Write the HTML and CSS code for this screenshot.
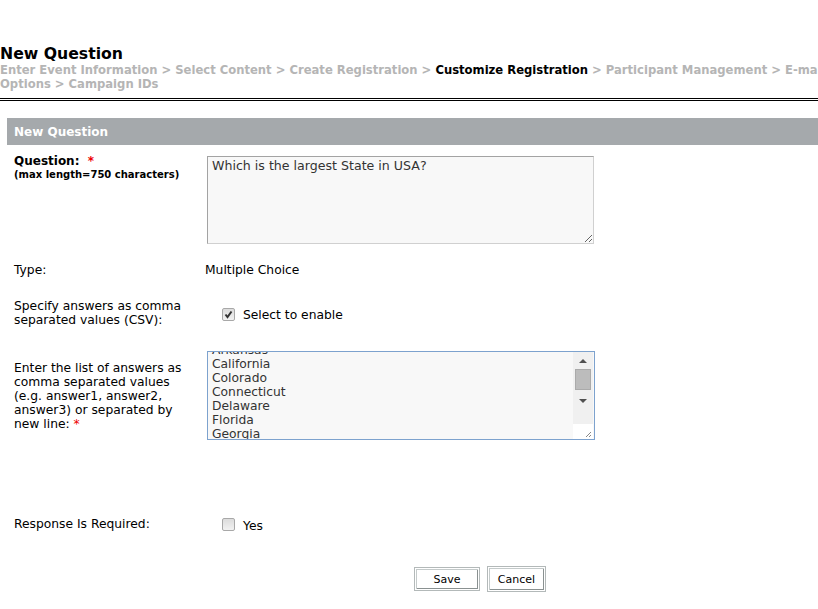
FILE: index.html
```html
<!DOCTYPE html>
<html>
<head>
<meta charset="utf-8">
<title>New Question</title>
<link rel="stylesheet" href="styles.css">
</head>
<body>
<div class="header">
  <h1 class="title">New Question</h1>
  <div class="crumbs">Enter Event Information &gt; Select Content &gt; Create Registration &gt; <span class="current">Customize Registration</span> &gt; Participant Management &gt; E-mail Options &gt; Campaign IDs</div>
  <div class="rule"></div>
</div>
<div class="panel-bar">New Question</div>
<div class="form">
  <div class="row row-question">
    <div class="label">
      <div class="qlabel">Question: <span class="req">*</span></div>
      <div class="hint">(max length=750 characters)</div>
    </div>
    <div class="value">
      <textarea class="qbox" readonly>Which is the largest State in USA?</textarea>
    </div>
  </div>
  <div class="row row-type">
    <div class="label">Type:</div>
    <div class="value">Multiple Choice</div>
  </div>
  <div class="row row-csv">
    <div class="label narrow">Specify answers as comma separated values (CSV):</div>
    <div class="value check-line csv-check">
      <span class="cb"><svg width="11" height="11" viewBox="0 0 11 11"><path d="M2.5 5.5 L4.5 8 L8.5 2.5" fill="none" stroke="#333" stroke-width="2"/></svg></span>
      <span>Select to enable</span>
    </div>
  </div>
  <div class="row row-list">
    <div class="label narrow">Enter the list of answers as comma separated values (e.g. answer1, answer2, answer3) or separated by new line: <span class="req">*</span></div>
    <div class="value">
      <div class="listbox">
        <div class="list-view">
          <div class="list-text">Arkansas<br>California<br>Colorado<br>Connecticut<br>Delaware<br>Florida<br>Georgia<br>Hawaii</div>
        </div>
        <div class="scrollbar">
          <div class="sb-track">
            <span class="arrow up"></span>
            <span class="thumb"></span>
            <span class="arrow down"></span>
          </div>
          <div class="sb-corner"><svg width="8" height="8" viewBox="0 0 8 8"><path d="M7 2 L2 7 M7 5 L5 7" stroke="#888" stroke-width="1"/></svg></div>
        </div>
      </div>
    </div>
  </div>
  <div class="row row-required">
    <div class="label">Response Is Required:</div>
    <div class="value check-line">
      <span class="cb"></span>
      <span class="yes">Yes</span>
    </div>
  </div>
  <div class="buttons">
    <button class="btn save">Save</button>
    <button class="btn cancel">Cancel</button>
  </div>
</div>
</body>
</html>
```
FILE: styles.css
```css
html, body {
  margin: 0;
  padding: 0;
  background: #fff;
}
body {
  font-family: "DejaVu Sans", Verdana, sans-serif;
  font-size: 12.3px;
  color: #000;
  width: 818px;
  overflow: hidden;
}
.header {
  padding-top: 45px;
}
.title {
  margin: 0;
  font-family: "DejaVu Sans", Tahoma, sans-serif;
  font-weight: bold;
  font-size: 15.7px;
  line-height: 18px;
  height: 18px;
  color: #000;
}
.crumbs {
  font-family: "DejaVu Sans", Tahoma, sans-serif;
  font-weight: bold;
  font-size: 11.6px;
  line-height: 14px;
  color: #b5b5b5;
  width: 830px;
  height: 28px;
  overflow: hidden;
}
.crumbs .current {
  color: #000;
}
.rule {
  margin-top: 7px;
  border-top: 3px double #000;
}
.panel-bar {
  margin: 17px 0 0 7px;
  height: 26px;
  padding-top: 1px;
  line-height: 27px;
  background: #a5a9ac;
  color: #fff;
  font-weight: bold;
  font-size: 12px;
  padding-left: 7px;
}
.form {
  padding-left: 14px;
}
.row {
  display: grid;
  grid-template-columns: 191px 1fr;
  line-height: 14px;
}
.row-question {
  margin-top: 9px;
  align-items: start;
}
.qlabel {
  font-weight: bold;
  font-size: 12px;
}
.req {
  color: #e00;
  margin-left: 4px;
}
.row-list .req {
  margin-left: 0;
}
.hint {
  font-weight: bold;
  font-size: 10px;
  line-height: 14px;
}
.qbox {
  display: block;
  margin: 2px 0 0 2px;
  box-sizing: border-box;
  width: 387px;
  height: 88px;
  border: 1px solid #a3a3a3;
  border-right-color: #d0d0d0;
  border-bottom-color: #d0d0d0;
  background: #f8f8f8;
  padding: 2px 4px;
  font-family: "DejaVu Sans", Verdana, sans-serif;
  font-size: 12.6px;
  line-height: 14px;
  color: #333;
  outline: none;
  resize: both;
}
.row-type {
  margin-top: 19px;
}
.row-csv {
  margin-top: 22px;
  align-items: center;
}
.narrow {
  width: 184px;
}
.check-line {
  display: flex;
  align-items: center;
  padding-left: 17px;
}
.csv-check {
  padding-top: 3px;
}
.cb {
  box-sizing: border-box;
  width: 13px;
  height: 13px;
  border: 1px solid #a8a8a8;
  border-radius: 2px;
  background: linear-gradient(#dcdcdc, #f2f2f2);
  display: inline-flex;
  align-items: center;
  justify-content: center;
  margin-right: 8px;
}
.row-list {
  margin-top: 24px;
  align-items: center;
}
.listbox {
  margin-left: 2px;
  box-sizing: border-box;
  width: 388px;
  height: 89px;
  border: 1px solid #7da2ce;
  background: #f8f8f8;
  display: flex;
  overflow: hidden;
}
.list-view {
  flex: 1;
  overflow: hidden;
  padding: 0 4px;
}
.list-text {
  margin-top: -9px;
  font-size: 12.3px;
  line-height: 14px;
  color: #333;
}
.scrollbar {
  width: 20px;
  margin-right: 1px;
  display: flex;
  flex-direction: column;
}
.sb-track {
  height: 65px;
  background: #f0f0f0;
  display: flex;
  flex-direction: column;
  align-items: center;
  padding-top: 7px;
}
.arrow {
  width: 0;
  height: 0;
  border-left: 4px solid transparent;
  border-right: 4px solid transparent;
}
.arrow.up {
  border-bottom: 4px solid #505050;
}
.arrow.down {
  border-top: 4px solid #505050;
  margin-top: 9px;
}
.thumb {
  margin-top: 6px;
  width: 16px;
  height: 21px;
  box-sizing: border-box;
  background: #bcbcbc;
  border: 1px solid #aaa;
}
.sb-corner {
  flex: 1;
  background: #fff;
  display: flex;
  align-items: flex-end;
  justify-content: flex-end;
  padding: 0 1px 1px 0;
}
.row-required {
  margin-top: 77px;
  align-items: center;
}
.yes {
  position: relative;
  top: 2px;
}
.buttons {
  margin: 35px 0 0 400px;
  display: flex;
  align-items: center;
  gap: 7px;
}
.btn {
  box-sizing: border-box;
  font-family: "DejaVu Sans", Verdana, sans-serif;
  font-size: 11px;
  color: #000;
  background: #fff;
  border: 1px solid #b3b9b9;
  box-shadow: inset 1px 1px 0 #fff, inset -1px -1px 0 #fff, inset 2px 2px 0 #c4caca, inset -2px -2px 0 #8a9191;
  padding: 0;
  margin: 0;
}
.btn.save {
  width: 66px;
  height: 24px;
}
.btn.cancel {
  width: 59px;
  height: 26px;
}
```
